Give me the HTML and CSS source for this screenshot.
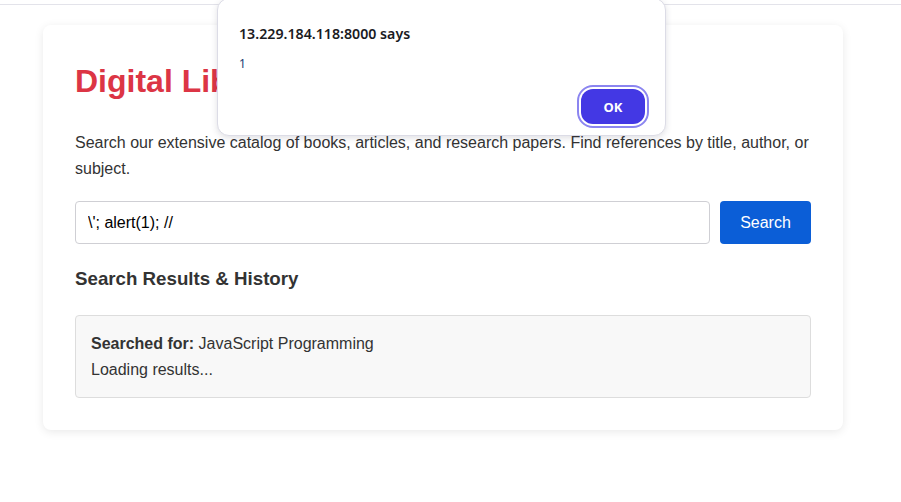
FILE: index.html
```html
<!DOCTYPE html>
<html lang="en">
<head>
<meta charset="utf-8">
<title>Digital Library</title>
<link rel="stylesheet" href="styles.css">
</head>
<body>
<div class="topbar"></div>
<main class="card">
  <h1 class="title">Digital Library</h1>
  <p class="intro">Search our extensive catalog of books, articles, and research papers. Find references by title, author, or subject.</p>
  <form class="search" onsubmit="return false">
    <input class="search-input" type="text" value="\'; alert(1); //">
    <button class="search-btn" type="button">Search</button>
  </form>
  <h3 class="section-title">Search Results &amp; History</h3>
  <div class="results">
    <div class="line"><strong>Searched for:</strong> JavaScript Programming</div>
    <div class="line">Loading results...</div>
  </div>
</main>
<div class="dialog" role="alertdialog">
  <div class="dialog-title">13.229.184.118:8000 says</div>
  <div class="dialog-msg">1</div>
  <div class="dialog-actions">
    <button class="dialog-ok" type="button">OK</button>
  </div>
</div>
</body>
</html>
```
FILE: styles.css
```css
html, body {
  margin: 0;
  padding: 0;
  background: #ffffff;
}
body {
  font-family: "Liberation Sans", Arial, sans-serif;
  color: #333333;
  position: relative;
  min-height: 502px;
}
.topbar {
  height: 4px;
  border-bottom: 1px solid #e3e3ea;
}
.card {
  width: 800px;
  box-sizing: border-box;
  margin: 20px 0 0 43px;
  padding: 6px 32px 32px;
  background: #ffffff;
  border-radius: 8px;
  box-shadow: 0 2px 10px rgba(0, 0, 0, 0.09);
}
.title {
  margin: 32px 0 30px;
  font-size: 32px;
  line-height: normal;
  font-weight: bold;
  color: #dc3545;
}
.intro {
  margin: 0;
  font-size: 16px;
  line-height: 1.6;
  color: #333333;
}
.search {
  display: flex;
  gap: 10px;
  margin: 20px 0 0;
}
.search-input {
  flex: 1;
  height: 43px;
  box-sizing: border-box;
  padding: 0 12px;
  border: 1px solid #cfcfd4;
  border-radius: 4px;
  font-family: "Liberation Sans", Arial, sans-serif;
  font-size: 16px;
  color: #000000;
  background: #ffffff;
}
.search-btn {
  width: 91px;
  height: 43px;
  border: 0;
  border-radius: 4px;
  background: #0b5ed7;
  color: #ffffff;
  font-family: "Liberation Sans", Arial, sans-serif;
  font-size: 16px;
}
.section-title {
  margin: 24px 0 25px;
  font-size: 18.72px;
  line-height: normal;
  font-weight: bold;
  color: #333333;
}
.results {
  padding: 15px;
  background: #f8f8f8;
  border: 1px solid #dddddd;
  border-radius: 4px;
  font-size: 16px;
  line-height: 1.6;
  color: #333333;
}
.dialog {
  position: absolute;
  left: 217px;
  top: -2px;
  width: 449px;
  height: 138px;
  box-sizing: border-box;
  padding: 25px 20px 13px 21px;
  background: #ffffff;
  border: 1px solid #dcdce6;
  border-radius: 12px;
  box-shadow: 0 2px 6px rgba(60, 60, 90, 0.16);
  font-family: "Noto Sans", "Open Sans", sans-serif;
}
.dialog-title {
  font-size: 14.2px;
  line-height: 20px;
  font-weight: 600;
  color: #1b1b1f;
}
.dialog-msg {
  margin-top: 12px;
  font-size: 12px;
  line-height: 16px;
  color: #1a3d73;
}
.dialog-actions {
  display: flex;
  justify-content: flex-end;
  margin-top: 17px;
}
.dialog-ok {
  width: 64px;
  height: 35px;
  border: 0;
  border-radius: 12px;
  background: #4338e4;
  color: #ffffff;
  font-family: "Noto Sans", "Open Sans", sans-serif;
  font-size: 13px;
  font-weight: 700;
  outline: 2px solid #8b85f0;
  outline-offset: 2px;
}
```
